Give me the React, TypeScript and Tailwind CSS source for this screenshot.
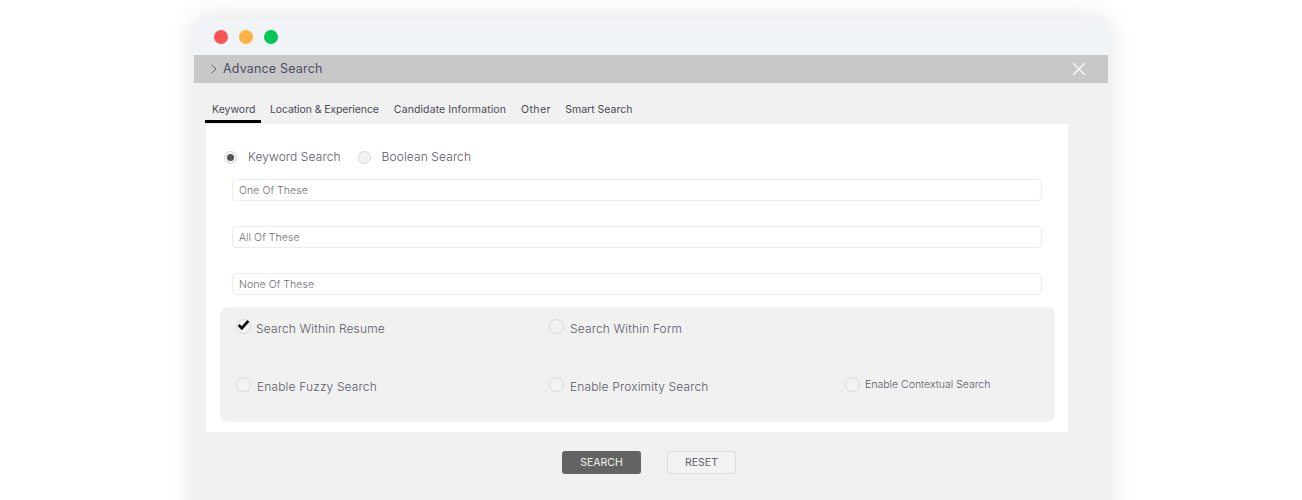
import { ChevronRight, X } from "lucide-react";

const tabs = [
  { label: "Keyword", className: "h-[26px] border-b-[3px] border-black pl-[7px] pr-[6px] pt-[5px]" },
  { label: "Location & Experience", className: "pl-[8.5px] pr-[7.5px] pt-[5px] tracking-[-0.1px]" },
  { label: "Candidate Information", className: "px-[7.5px] pt-[5px] tracking-[0.1px]" },
  { label: "Other", className: "px-[7.5px] pt-[5px] tracking-[0.4px]" },
  { label: "Smart Search", className: "px-[7px] pt-[5px]" },
];

function Circle({ checked = false }: { checked?: boolean }) {
  return (
    <span className="relative block h-[15px] w-[15px] shrink-0 rounded-full border border-[#d6d6d6] bg-[#f3f3f3]">
      {checked && (
        <svg viewBox="0 0 16 16" className="absolute left-[0px] top-[-2px] h-[13px] w-[13px]">
          <path d="M2 8.5 L6 12.5 L14 3.5" fill="none" stroke="#111" strokeWidth="3.4" />
        </svg>
      )}
    </span>
  );
}

function Field({ label }: { label: string }) {
  return (
    <div className="flex h-[22px] items-center rounded-[4px] border border-[#ececec] bg-white px-[6px] pt-[1px] text-[10.5px] font-light tracking-[0.05px] text-[#6f6d74]">
      {label}
    </div>
  );
}

export default function App() {
  return (
    <div className="flex h-[500px] justify-center overflow-hidden bg-white pt-[18px] font-['Inter',sans-serif]">
      <div className="h-[520px] w-[914px] overflow-hidden rounded-t-[10px] bg-[#f1f1f1] shadow-[0_0_26px_rgba(0,0,0,0.12)]">

        {/* Title bar */}
        <div className="flex h-[37px] items-center gap-[11px] bg-[#f1f4f7] pl-[20px]">
          <span className="h-[14px] w-[14px] rounded-full bg-[#fc5454]" />
          <span className="h-[14px] w-[14px] rounded-full bg-[#fdb246]" />
          <span className="h-[14px] w-[14px] rounded-full bg-[#00c853]" />
        </div>

        {/* Header */}
        <div className="flex h-[28px] items-center justify-between bg-[#c8c8c8] pl-[12px] pr-[18px]">
          <div className="flex items-center gap-[1px] text-[12.5px] tracking-[0.17px] text-[#4e4e63]">
            <ChevronRight size={16} strokeWidth={1.25} />
            <span className="pt-[1px]">Advance Search</span>
          </div>
          <X size={22} strokeWidth={1.25} className="text-white" />
        </div>

        {/* Tabs */}
        <div className="ml-[11px] mt-[14px] flex h-[26px] text-[10.5px] text-[#4a4a55]">
          {tabs.map((tab) => (
            <div key={tab.label} className={tab.className}>
              {tab.label}
            </div>
          ))}
        </div>

        {/* Panel */}
        <div className="ml-[12px] mt-[1px] h-[308px] w-[862px] bg-white px-[14px] pt-[26px] font-light">
          <div className="ml-[4px] flex h-[14px] items-center text-[12px] text-[#5b5a67]">
            <span className="flex h-[13px] w-[13px] items-center justify-center rounded-full border border-[#d6d6d6] bg-[#f3f3f3]">
              <span className="h-[7px] w-[7px] rounded-full bg-[#555]" />
            </span>
            <span className="ml-[11px] tracking-[0.1px]">Keyword Search</span>
            <span className="ml-[17px] h-[13px] w-[13px] rounded-full border border-[#d6d6d6] bg-[#f3f3f3]" />
            <span className="ml-[11px] tracking-[0.1px]">Boolean Search</span>
          </div>

          <div className="ml-[12px] mr-[12px] mt-[15px] flex flex-col gap-[25px]">
            <Field label="One Of These" />
            <Field label="All Of These" />
            <Field label="None Of These" />
          </div>

          <div className="mt-[12px] grid h-[115px] w-[835px] grid-cols-[313px_296px_1fr] grid-rows-[58px_1fr] rounded-lg bg-[#f1f1f1] pl-[16px] pt-[12px] text-[12px] tracking-[0.15px] text-[#5b5a67]">
            <div className="flex items-start gap-[5px]">
              <Circle checked />
              <span className="mt-[1px]">Search Within Resume</span>
            </div>
            <div className="flex items-start gap-[6px]">
              <Circle />
              <span className="mt-[1px]">Search Within Form</span>
            </div>
            <div />
            <div className="flex items-start gap-[6px]">
              <Circle />
              <span className="mt-[1px]">Enable Fuzzy Search</span>
            </div>
            <div className="flex items-start gap-[6px]">
              <Circle />
              <span className="mt-[1px]">Enable Proximity Search</span>
            </div>
            <div className="flex items-start gap-[5px] text-[10.5px] tracking-normal">
              <Circle />
              <span>Enable Contextual Search</span>
            </div>
          </div>
        </div>

        {/* Buttons */}
        <div className="ml-[368px] mt-[19px] flex gap-[26px] text-[10.5px]">
          <button className="h-[23px] w-[79px] rounded-[3px] bg-[#636363] text-[#f2f2f2]">SEARCH</button>
          <button className="h-[23px] w-[69px] rounded-[3px] border border-[#dcdcdc] bg-[#f3f3f3] text-[#66626a]">RESET</button>
        </div>
      </div>
    </div>
  );
}
